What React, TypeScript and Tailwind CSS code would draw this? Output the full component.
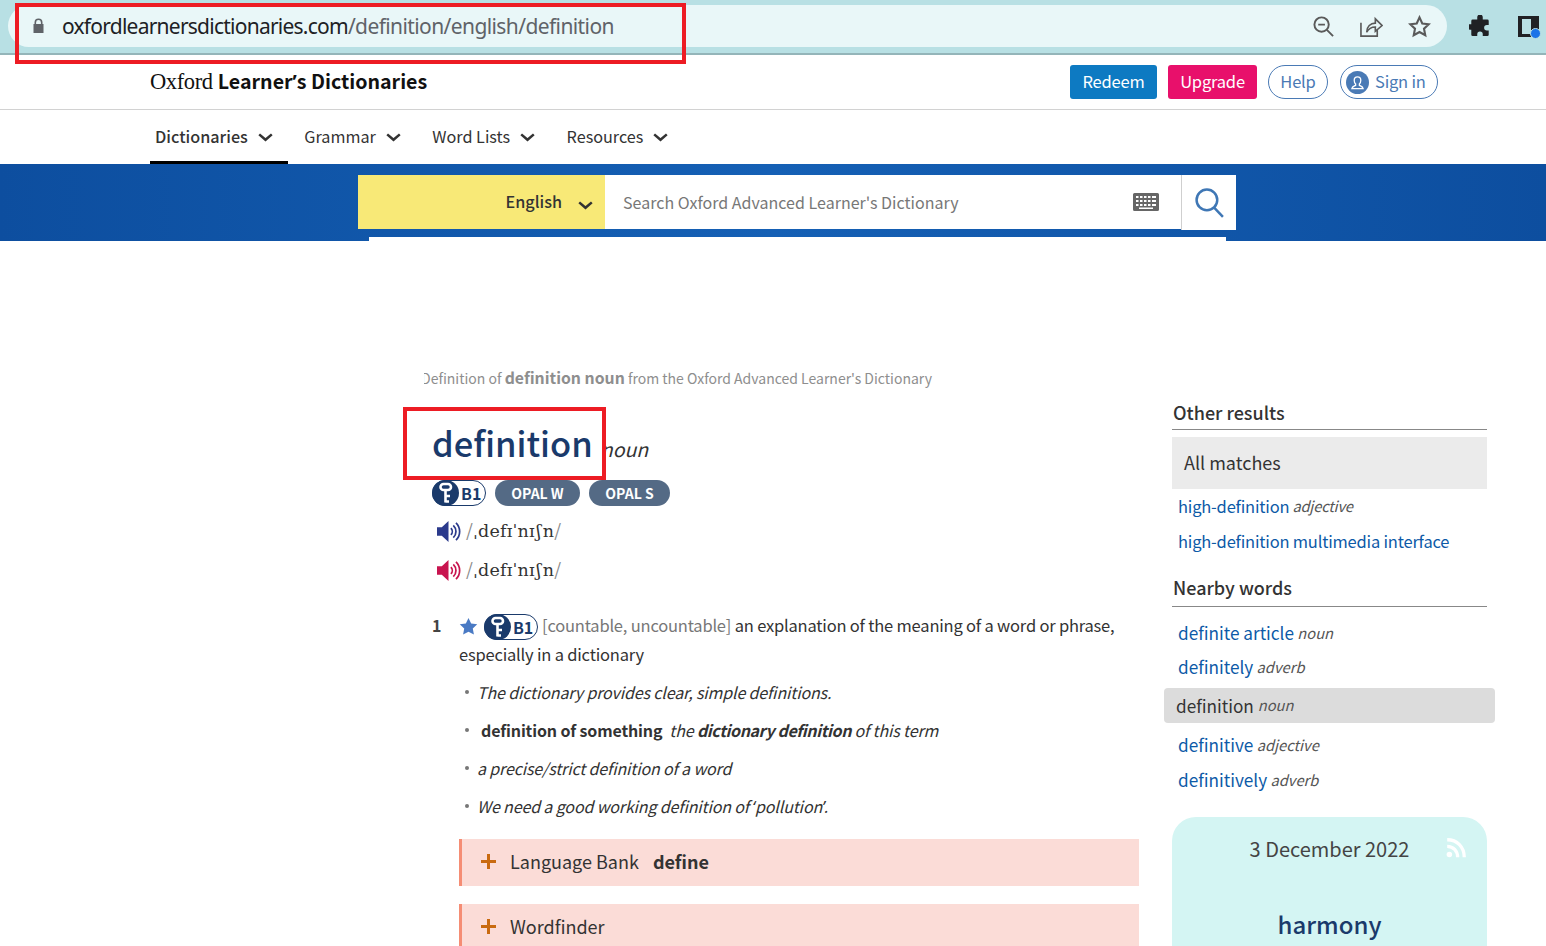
const SANS = 'font-["Noto_Sans_CJK_SC","Noto_Sans",sans-serif]'

const navItems = [
  { label: 'Dictionaries', active: true },
  { label: 'Grammar', active: false },
  { label: 'Word Lists', active: false },
  { label: 'Resources', active: false },
]

function Chevron({ className = '' }: { className?: string }) {
  return (
    <svg viewBox="0 0 16 10" className={`w-[15px] h-[9px] ${className}`} fill="none" stroke="currentColor" strokeWidth="2.8">
      <path d="M1 1.500 8 7.500l7-6" />
    </svg>
  )
}

function KeyBadge() {
  return (
    <span className="inline-flex items-center rounded-full border border-[#1a3a6b] bg-white h-[26px] w-[54px]">
      <span className="w-[27px] h-[26px] -ml-px rounded-full bg-[#1a3a6b] flex items-center justify-center shrink-0">
        <svg viewBox="0 0 16 22" className="w-[16px] h-[22px]" fill="none" stroke="#fff" strokeWidth="2.6">
          <rect x="2.500" y="2" width="10.500" height="6" rx="3" />
          <path d="M7.500 8v12.500M7.500 14h4.500M7.500 19.500h3.500" />
        </svg>
      </span>
      <span className="ml-[2px] text-[16px] leading-none font-semibold text-[#1a3a6b]">B1</span>
    </span>
  )
}

function Speaker({ color }: { color: string }) {
  return (
    <svg viewBox="0 0 26 24" className="w-[25px] h-[23px]" fill="none" style={{ color }}>
      <path d="M1 7.500h5L13 1v22l-7-6.500H1z" fill="currentColor" />
      <path d="M15.500 8.500a5 5 0 0 1 0 7M18 5.500a9 9 0 0 1 0 13M20.800 3a12.500 12.500 0 0 1 0 18" stroke="currentColor" strokeWidth="1.800" />
    </svg>
  )
}

function Ipa() {
  return (
    <span className="font-['DejaVu_Serif',serif] text-[17.500px] tracking-[0.2px] leading-none text-[#333] ml-[5px] whitespace-pre">
      <span className="text-[#8a8a8a] font-['Noto_Sans_CJK_SC',sans-serif]">/</span>ˌdefɪˈnɪ<span className="mx-[1.500px]">ʃ</span>n<span className="text-[#8a8a8a] font-['Noto_Sans_CJK_SC',sans-serif]">/</span>
    </span>
  )
}

function Word({ word, pos, className = 'mb-[14px]', big = false }: { word: string; pos?: string; className?: string; big?: boolean }) {
  return (
    <div className={`px-[6px] h-5 flex items-center whitespace-pre leading-5 ${big ? 'text-[17.200px]' : 'pb-[2px] text-[16.500px] tracking-[-0.2px]'} ${className}`}>
      <span className="text-[#0d5aa7]">{word}</span>
      {pos && <span className="italic text-[14.700px] text-[#555]"> {pos}</span>}
    </div>
  )
}

function Plus() {
  return (
    <svg viewBox="0 0 15 15" className="w-[15px] h-[15px] mt-[2px] mr-[14px] text-[#c96a10]" fill="currentColor">
      <path d="M6 0h3v6h6v3H9v6H6V9H0V6h6z" />
    </svg>
  )
}

function Bullet() {
  return <span className="w-[4px] h-[4px] ml-[6px] rounded-full bg-[#777] shrink-0" />
}

function Example({ children }: { children: React.ReactNode }) {
  return (
    <li className="flex items-center h-[28px] pb-[2px] mb-[10px]">
      <Bullet />
      <span className="ml-[8px] whitespace-pre">{children}</span>
    </li>
  )
}

export default function App() {
  return (
    <div className={`relative h-[946px] overflow-hidden bg-white ${SANS}`}>
      {/* browser bar */}
      <div className="h-[55px] bg-[#b8e0e4] border-b-2 border-[#94b5b9] flex items-start pt-[5px] pl-2 pr-[7px]">
        <div className="flex-1 h-[42px] rounded-full bg-[#e9f7f8] flex items-center pl-[24px] pr-[16px]">
          <svg viewBox="0 0 12 16" className="w-[13px] h-[16px] text-[#5f6368]" fill="currentColor">
            <path d="M2 6V4.500a4 4 0 0 1 8 0V6h1v9H1V6zm1.600 0h4.800V4.500a2.400 2.400 0 0 0-4.800 0z" />
          </svg>
          <span className="ml-[17px] text-[21px] leading-none tracking-[-0.76px] text-[#202124] font-['Noto_Sans',sans-serif]">
            oxfordlearnersdictionaries.com<span className="text-[#5f6368] tracking-[-0.6px]">/definition/english/definition</span>
          </span>
          <div className="ml-auto flex items-center gap-[25px] text-[#5a5a5a]">
            <svg viewBox="0 0 24 24" className="w-[23px] h-[23px]" fill="none" stroke="currentColor" strokeWidth="2">
              <circle cx="10" cy="10" r="7.500" /><path d="M6.500 10h7M15.500 15.500 22 22" />
            </svg>
            <svg viewBox="0 0 24 24" className="w-[23px] h-[23px]" fill="none" stroke="currentColor" strokeWidth="1.700">
              <path d="M1 8v14h17v-6M7 18c0-6 4-9.500 9-9.500V4l7 7-7 6v-4.500c-4 0-7 1.500-9 5.500z" />
            </svg>
            <svg viewBox="0 0 24 24" className="w-[23px] h-[23px]" fill="none" stroke="currentColor" strokeWidth="2.200">
              <path d="m12 2.500 2.900 6.300 6.800.8-5 4.700 1.300 6.800-6-3.400-6 3.400 1.300-6.800-5-4.700 6.800-.8z" />
            </svg>
          </div>
        </div>
        <div className="w-[92px] h-[42px] flex items-center justify-between pl-[22px]">
          <svg viewBox="0 0 24 24" className="w-[22px] h-[22px] text-[#202124]" fill="currentColor">
            <path d="M9 2.500a3 3 0 0 1 6 0V5h5a1.500 1.500 0 0 1 1.500 1.500V11h-2a3 3 0 0 0 0 6h2v4.500A1.500 1.500 0 0 1 20 23h-5v-2a3 3 0 0 0-6 0v2H4a1.500 1.500 0 0 1-1.500-1.500V16H1a3 3 0 0 1 0-6h1.500V6.500A1.500 1.500 0 0 1 4 5h5z" />
          </svg>
          <span className="relative w-[21px] h-[21px] border-[3px] border-[#202124] border-l-[4px] bg-[#b8e0e4]">
            <span className="absolute -top-[3px] -right-[3px] w-[8px] h-[14px] bg-[#202124]" />
            <span className="absolute -bottom-[5px] -right-[5px] w-[11px] h-[11px] rounded-full bg-[#1a73e8] border border-[#b8e0e4]" />
          </span>
        </div>
      </div>

      {/* site header */}
      <div className="h-[55px] border-b border-[#d2d2d2] flex items-center pl-[150px] pr-[108px]">
        <div className="text-[19.600px] leading-none text-[#111] whitespace-pre">
          <span className="font-['Liberation_Serif',serif] text-[22.500px] tracking-[-0.4px]">Oxford </span>
          <span className="font-bold">Learner<span className="font-['Noto_Sans',sans-serif]">’</span>s Dictionaries</span>
        </div>
        <div className="ml-auto flex items-center text-[16.500px] tracking-[-0.2px] leading-none">
          <span className="h-[34px] w-[87px] pb-[2px] rounded-[3px] bg-[#0d7ac2] text-white flex items-center justify-center">Redeem</span>
          <span className="ml-[11px] h-[34px] w-[89px] pb-[2px] rounded-[3px] bg-[#e8106b] text-white flex items-center justify-center">Upgrade</span>
          <span className="ml-[11px] h-[34px] w-[60px] pb-[2px] rounded-full border border-[#4a7ab5] text-[#4a7ab5] flex items-center justify-center">Help</span>
          <span className="ml-[12px] h-[34px] w-[98px] rounded-full border border-[#4a7ab5] text-[#4a7ab5] flex items-center pl-[5px] gap-[6px]">
            <span className="w-[23px] h-[23px] rounded-full bg-[#4a7ab5] flex items-center justify-center">
              <svg viewBox="0 0 16 16" className="w-[15px] h-[15px]" fill="none" stroke="#fff" strokeWidth="1.400">
                <path d="M2 14.500c.3-2 2-2.500 4-3.500V9.500C4.800 8.500 4.500 7 4.500 5.500 4.500 3.500 6 2 8 2s3.500 1.500 3.500 3.500c0 1.500-.3 3-1.500 4V11c2 1 3.700 1.500 4 3.500z" />
              </svg>
            </span>
            <span className="pb-[2px]">Sign in</span>
          </span>
        </div>
      </div>

      {/* nav */}
      <div className="h-[54px] flex pl-[150px] text-[#333] text-[16.200px] leading-none">
        {navItems.map((item) => (
          <div
            key={item.label}
            className={`h-full flex items-center pl-[5px] pr-[15px] mr-[11.500px] gap-[10px] border-b-[3px] ${item.active ? 'border-black font-medium' : 'border-transparent'}`}
          >
            <span className="mt-[2px]">{item.label}</span>
            <Chevron className="mt-[3px]" />
          </div>
        ))}
      </div>

      {/* search band */}
      <div className="h-[77px] bg-gradient-to-r from-[#0d4e9f] via-[#1560b5] to-[#0d4e9f] relative pl-[358px] pt-[11px]">
        <div className="flex w-[878px] items-start">
          <div className="w-[247px] h-[54px] bg-[#f8e977] flex items-center justify-end pr-[12px] gap-[16px] text-[#333] font-medium text-[16.200px] leading-none">
            <span className="pb-[2px]">English</span>
            <Chevron className="mt-[6px]" />
          </div>
          <div className="w-[576px] h-[54px] bg-white flex items-center pl-[18px] pr-[22px]">
            <span className="text-[16px] leading-none text-[#777] tracking-[0.02px]">Search Oxford Advanced Learner's Dictionary</span>
            <svg viewBox="0 0 26 18" className="ml-auto w-[26px] h-[18px] text-[#666]" fill="currentColor">
              <path fillRule="evenodd" d="M1.500 0h23A1.500 1.500 0 0 1 26 1.500v15a1.500 1.500 0 0 1-1.500 1.500h-23A1.500 1.500 0 0 1 0 16.500v-15A1.500 1.500 0 0 1 1.500 0M3 3v2h2.500V3zm4 0v2h2.500V3zm4 0v2h2.500V3zm4 0v2h2.500V3zm4 0v2H23V3zM3 7v2h2.500V7zm4 0v2h2.500V7zm4 0v2h2.500V7zm4 0v2h2.500V7zm4 0v2H23V7zM3 11v2h2.500v-2zm4 0v2h2.500v-2zm4 0v2h2.500v-2zm4 0v2h2.500v-2zm4 0v2H23v-2zM6 14.500V16h14v-1.500z" />
            </svg>
          </div>
          <div className="w-[55px] h-[55px] bg-white border-l border-[#cfcfcf] flex items-center justify-center">
            <svg viewBox="0 0 30 30" className="w-[31px] h-[31px] text-[#3f77b5]" fill="none" stroke="currentColor" strokeWidth="2.400">
              <circle cx="12.500" cy="12.500" r="10" /><path d="m19.500 20 8.500 9" />
            </svg>
          </div>
        </div>
        <div className="absolute bottom-0 left-[369px] w-[857px] h-[4px] bg-white" />
      </div>

      {/* main */}
      <div className="flex pl-[424px] pt-[127px]">
        <div className="w-[715px] shrink-0 min-w-0 relative">
          <div className="h-[20px] overflow-hidden text-[14px] leading-[20px] text-[#8e8e8e] whitespace-pre">
            <span className="-ml-[3px]">Definition of </span><span className="font-semibold text-[15.800px]">definition noun</span> from the Oxford Advanced Learner's Dictionary
          </div>
          <div className="mt-[28px] ml-[8px] flex items-baseline h-[53px]">
            <h1 className="text-[34.500px] leading-[52px] font-medium text-[#1a3a6b]">definition</h1>
            <span className="ml-[8px] italic text-[19.500px] leading-none text-[#333]">noun</span>
          </div>
          <div className="ml-[8px] mt-[11px] flex items-center gap-[9px]">
            <KeyBadge />
            <span className="h-[26px] w-[85px] rounded-full bg-[#546a85] text-white font-semibold text-[14px] leading-none flex items-center justify-center">OPAL W</span>
            <span className="h-[26px] w-[81px] rounded-full bg-[#546a85] text-white font-semibold text-[14px] leading-none flex items-center justify-center">OPAL S</span>
          </div>
          <div className="ml-[12px] mt-[13px] h-[24px] flex items-center"><Speaker color="#2b3a8c" /><Ipa /></div>
          <div className="ml-[12px] mt-[15px] h-[24px] flex items-center"><Speaker color="#c8144f" /><Ipa /></div>

          {/* sense 1 */}
          <div className="flex mt-[30px]">
            <span className="w-[35px] ml-[8px] -mr-[8px] font-semibold text-[16px] leading-[26px] text-[#444] shrink-0">1</span>
            <div className="flex-1 min-w-0 text-[16.500px] tracking-[-0.2px] leading-[28px] text-[#333]">
              <div className="flex items-center whitespace-pre h-[28px] pb-[2px]">
                <svg viewBox="0 0 20 20" className="w-[19px] h-[19px] text-[#4a7ac4] mt-[3px] mr-[6px]" fill="currentColor">
                  <path d="m10 1 2.800 5.900 6.400.8-4.700 4.400 1.200 6.400L10 15.400l-5.700 3.100 1.200-6.400L.8 7.700l6.400-.8z" />
                </svg>
                <span className="mt-[3px] flex"><KeyBadge /></span>
                <span className="text-[#777] ml-[4px]">[countable, uncountable]</span> an explanation of the meaning of a word or phrase,
              </div>
              <div className="leading-[29px]">especially in a dictionary</div>
              <ul className="mt-[10px] italic text-[16px] tracking-[-0.14px]">
                <Example>The dictionary provides clear, simple definitions.</Example>
                <li className="flex items-center h-[28px] pb-[2px] mb-[10px]">
                  <Bullet />
                  <span className="ml-[12px] whitespace-pre">
                    <span className="not-italic font-semibold">definition of something</span>  the <b className="font-semibold tracking-[-0.38px]">dictionary definition</b> of this term
                  </span>
                </li>
                <Example>a precise/strict definition of a word</Example>
                <Example>
                  We need a good working definition of <span className="font-['Noto_Sans',sans-serif]">‘</span>pollution<span className="font-['Noto_Sans',sans-serif]">’.</span>
                </Example>
              </ul>
              <div className="mt-[18px] h-[47px] pb-[4px] bg-[#fbdcd7] border-l-[3px] border-[#f58d74] flex items-center pl-[19px] text-[18px] tracking-normal leading-none">
                <Plus />
                <span>Language Bank</span>
                <b className="ml-[14px] font-semibold">define</b>
              </div>
              <div className="mt-[18px] h-[47px] pb-[4px] bg-[#fbdcd7] border-l-[3px] border-[#f58d74] flex items-center pl-[19px] text-[18px] tracking-normal leading-none">
                <Plus />
                <span>Wordfinder</span>
              </div>
            </div>
          </div>
        </div>

        {/* sidebar */}
        <aside className="ml-[33px] w-[315px] mt-[34px] shrink-0 text-[#333]">
          <h2 className="h-[28px] pl-px border-b border-[#888] text-[18px] leading-[20px] font-medium">Other results</h2>
          <div className="mt-[7px] h-[52px] pb-[2px] bg-[#ebebeb] flex items-center px-[12px] text-[18px] leading-none">All matches</div>
          <div className="mt-[8px]">
            <Word word="high-definition" pos="adjective" className="mb-[15px]" />
            <Word word="high-definition multimedia interface" className="" />
          </div>
          <h2 className="mt-[27px] h-[28px] pl-px border-b border-[#888] text-[18px] leading-[16px] font-medium">Nearby words</h2>
          <div className="mt-[16px]">
            <Word big word="definite article" pos="noun" />
            <Word big word="definitely" pos="adverb" className="" />
          </div>
          <div className="-mx-[8px] mt-[11px] h-[35px] rounded-[4px] bg-[#dcdcdc] flex items-center pl-[12px] text-[17.200px] leading-none whitespace-pre">
            definition <span className="italic text-[14.700px] text-[#555]">noun</span>
          </div>
          <div className="mt-[12px]">
            <Word big word="definitive" pos="adjective" className="mb-[15px]" />
            <Word big word="definitively" pos="adverb" className="" />
          </div>
          <div className="mt-[27px] h-[140px] rounded-t-[24px] bg-[#d4f5f3] relative text-center">
            <div className="pt-[18px] text-[20px] leading-[28px] text-[#444]">3 December 2022</div>
            <svg viewBox="0 0 20 20" className="absolute top-[20px] right-[20px] w-[22px] h-[22px]" fill="none" stroke="#fff" strokeWidth="3">
              <circle cx="4" cy="16" r="2.500" fill="#fff" stroke="none" /><path d="M2 8.500c5.500 0 9.500 4 9.500 10M2 2.500c9 0 15.500 6.500 15.500 16" />
            </svg>
            <div className="mt-[44px] font-medium text-[24px] leading-[34px] text-[#1a3a6b]">harmony</div>
          </div>
        </aside>
      </div>

      {/* red annotation boxes */}
      <div className="absolute left-[15px] top-[3px] w-[671px] h-[61px] border-[4px] border-[#ed1c24]" />
      <div className="absolute left-[403px] top-[407px] w-[203px] h-[73px] border-[4px] border-[#ed1c24]" />
    </div>
  )
}
